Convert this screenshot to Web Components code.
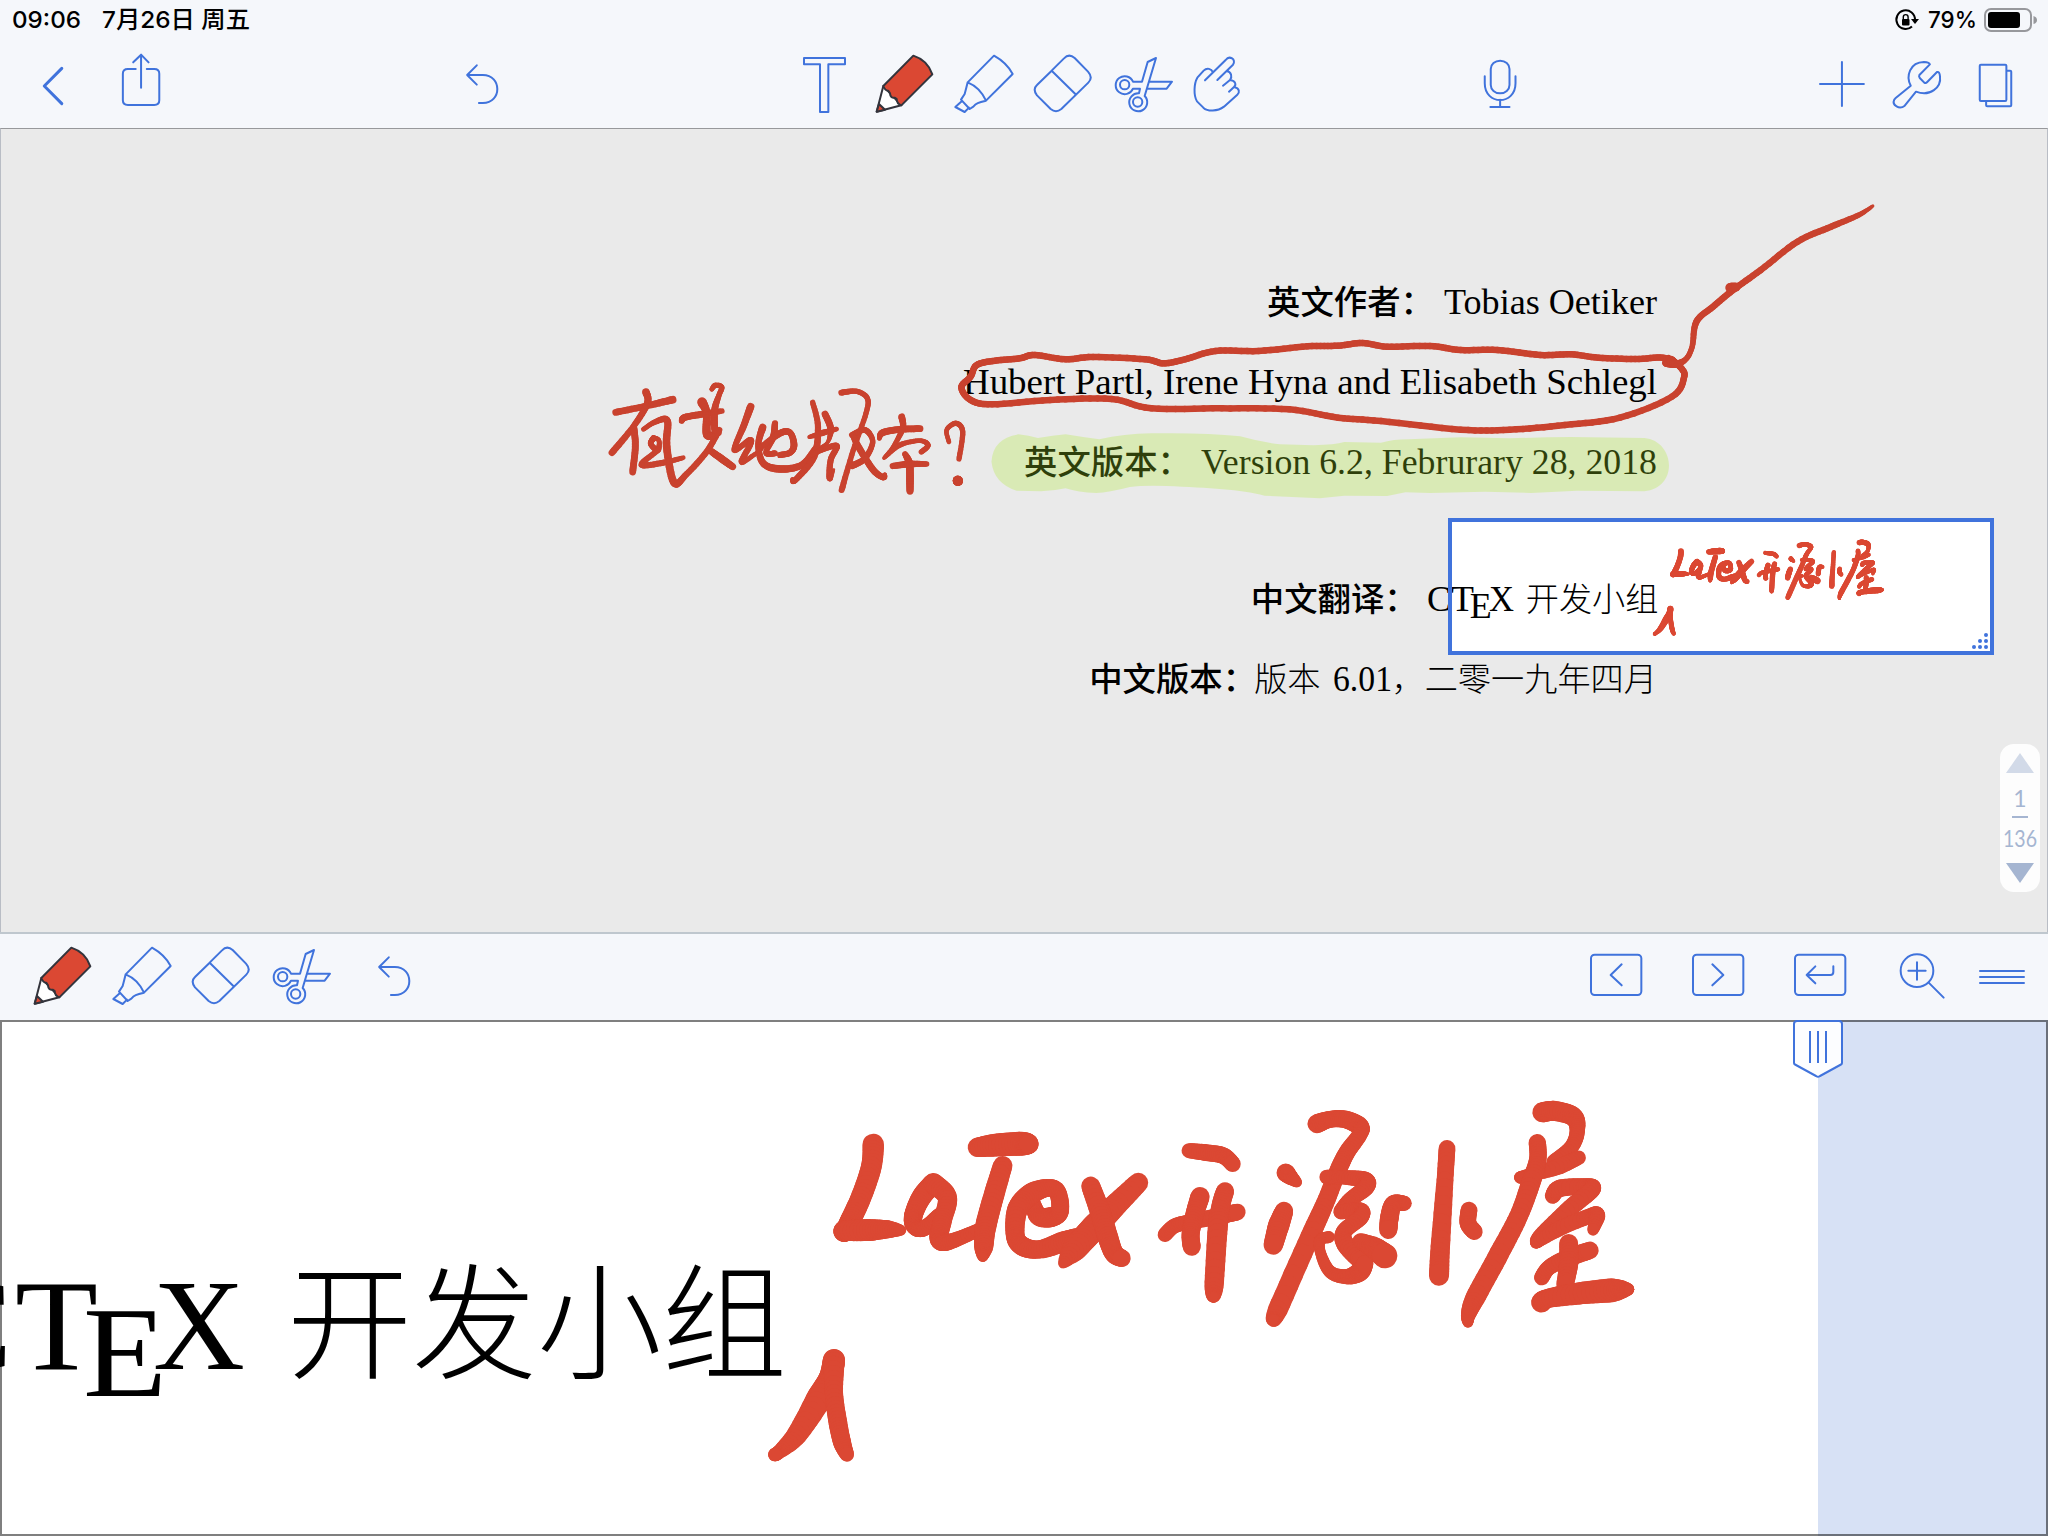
<!DOCTYPE html>
<html lang="zh-CN">
<head>
<meta charset="utf-8">
<title>Notability</title>
<style>
  html, body { margin: 0; height: 100%; background: #f5f7fb; overflow: hidden; }
</style>
</head>
<body>
<notes-app></notes-app>
<script>
const BLUE = '#4073dc', RED = '#db4833';

/* Ink strokes: "x,y,width" triples; the width carries on when left out. */
const LATEX_INK = [
  '190,193,64 184,260,62 154,350,62 122,420,62 107,452,62 107,452,62 180,450,66 235,448,54 274,451,30',
  '370,310,62 335,350,60 312,400,56 310,430,54 325,446,50 350,440,48 385,405,40',
  '372,312,64 412,352,58 398,420,56 386,474,56 405,488,50 450,474,44 505,450,40',
  '502,202,56 560,195,68 635,191,72 657,192,58',
  '578,257,58 552,345,62 527,440,64 521,500,58 518,532,28',
  '667,365,44 685,408,56 725,411,60 750,392,54 742,335,52 710,324,52 660,344,64 622,390,62 616,468,56 640,500,58 690,508,54 760,485,62 800,470,50',
  '985,308,58 900,392,70 850,445,78 795,505,76 758,552,26',
  '842,318,56 872,400,62 893,470,62 912,520,58 936,535,52',
  '1137,212,44 1190,218,50 1240,227,50 1268,252,48',
  '1065,464,44 1095,437,44 1150,424,46 1230,408,50 1282,396,50',
  '1170,350,58 1155,400,56 1142,460,54 1145,500,54',
  '1245,334,54 1232,380,56 1222,460,60 1212,620,58 1210,652,30',
  '1427,278,56 1440,290,48 1461,307,30',
  '1422,393,54 1405,440,64 1390,495,58',
  '1521,131,58 1560,118,50 1605,118,52 1648,138,56 1650,162,46 1612,215,50 1585,270,52 1545,370,54 1500,470,58 1403,690,60 1391,718,30',
  '1550,291,44 1600,292,42 1665,300,50 1668,322,50 1620,360,46 1593,394,46',
  '1593,396,44 1650,390,46 1652,412,48 1602,455,48 1608,495,54 1660,545,60',
  '1557,471,36 1530,480,34 1532,520,32 1560,575,38 1610,590,44 1650,575,58 1665,550,50',
  '1650,482,42 1695,505,64 1725,528,74',
  '1783,370,44 1750,372,52 1738,415,56 1735,450,54',
  '1911,205,50 1905,300,50 1891,500,58 1887,587,60',
  '1977,390,50 1974,430,50 1993,455,50',
  '2197,97,60 2235,93,60 2290,110,58 2302,150,46 2285,200,44 2230,245,42',
  '2306,233,42 2240,262,48 2140,290,38 2134,291,34',
  '2182,188,52 2183,240,52 2162,310,58 2125,410,56 2060,535,60 1995,655,60 1975,705,44 1974,728,30',
  '2228,348,46 2250,325,52 2330,320,50 2345,330,50 2280,385,52 2195,468,52 2178,488,34',
  '2178,488,34 2250,445,46 2340,408,46 2361,408,50 2349,450,34',
  '2195,593,46 2220,560,46 2285,530,54 2340,511,52',
  '2276,490,56 2276,550,58 2265,615,52',
  '2194,667,62 2215,655,56 2310,640,66 2405,631,72 2445,628,46 2458,628,28',
  '72,840,66 60,895,68 25,960,78 -40,1065,62 -92,1115,42 -106,1124,40',
  '72,840,66 72,940,54 84,1030,56 97,1090,54 111,1124,42'
];

const REMARK_INK = [
  '77,127,18 160,110,17 248,89,20', '168,66,20 172,100,18 130,170,16 66,248,18',
  '132,175,18 136,230,18 128,306,18', '160,178,12 195,156,14 232,152,18 230,230,20 252,338,20 290,312,16 350,245,16 388,180,16',
  '190,205,16 182,222,14 203,240,16 207,212,12 190,202,12', '205,240,14 155,284,16 220,278,16 280,263,12',
  '275,153,14 285,142,18 340,132,18 396,123,14', '336,96,26 350,130,20 352,195,22 385,188,18',
  '365,58,12 376,46,14 395,52,14 386,78,14 374,120,18 374,180,18', '348,160,12 375,158,12', '365,245,18 400,270,20 428,290,18',
  '482,110,20 460,170,18 433,240,14 478,211,16 480,225,16 456,276,16 515,238,10',
  '518,172,20 505,225,16 520,280,18 570,297,20 635,285,18 675,235,14', '555,160,16 550,200,18 528,248,14 555,250,16',
  '512,232,14 570,190,18 600,188,16 612,225,18 600,248,16 570,255,16',
  '668,97,14 684,170,16 672,260,18 616,330,16 607,327,10', '705,132,18 722,175,18 714,215,10 692,232,8', '658,201,10 700,188,16 740,177,12', '655,262,8 695,240,14 740,228,16 722,270,16 719,325,16 731,299,8',
  '754,68,16 800,64,14 832,85,14 828,130,14 790,240,14 755,360,16', '785,195,14 825,180,16 848,215,14 825,265,16 787,287,18', '788,195,14 808,235,18 850,300,18 880,322,16 885,313,10',
  '868,206,10 878,188,18 930,178,18 990,176,18', '935,140,18 938,175,16 910,230,12 882,264,10', '885,262,10 930,225,14 990,212,12 1014,226,14 994,246,14',
  '945,252,14 958,280,20 960,330,20 960,364,18', '908,288,16 960,282,18 1010,282,14',
  '1077,216,12 1070,180,12 1098,160,14 1118,185,14 1107,267,14', '1103,332,26 1104,333,26'
];

const LASSO_INK = [
  '1190,505,6 1185,520 1200,522 1180,503 1135,507 1075,503 1030,493 980,495 910,480 850,480 800,468 730,470 690,459 650,467 600,469 520,483 450,483 400,508 365,520 335,508 250,501 205,508 155,495 130,505 90,512 60,525 50,560 35,592 50,630 85,643 180,630 280,627 345,655 460,655 570,658 650,683 720,693 850,719 930,719 1020,705 1110,683 1195,620 1215,560 1208,530 1194,508',
  '1194,512,9 1202,522,7 1218,507,5 1228,470,5 1235,395,6 1262,350,6 1295,300,6 1340,240,6 1400,155,6 1455,110,6 1500,75,5 1523,48,3',
  '1290,293,9 1300,291,8'
];

/* Catmull-Rom sampling into short round-capped segments. sx/sy/ox/oy map the recorded units to pixels. */
function ink(strokes, ox, oy, sx, sy, sw, color) {
  let out = '';
  for (const s of strokes) {
    let w = 6;
    const p = s.split(' ').map(t => {
      const a = t.split(',').map(Number);
      if (a.length > 2) w = a[2];
      return [ox + a[0] * sx, oy + a[1] * sy, w * sw];
    });
    let last = p[0];
    for (let i = 0; i < p.length - 1; i++) {
      const a = p[i - 1] || p[i], b = p[i], c = p[i + 1], d = p[i + 2] || c;
      for (let k = 1; k <= 8; k++) {
        const t = k / 8, q = [0, 1, 2].map(j => j === 2 ? b[2] + (c[2] - b[2]) * t :
          0.5 * (2 * b[j] + (c[j] - a[j]) * t + (2 * a[j] - 5 * b[j] + 4 * c[j] - d[j]) * t * t + (3 * b[j] - a[j] - 3 * c[j] + d[j]) * t * t * t));
        out += `<line x1="${last[0].toFixed(1)}" y1="${last[1].toFixed(1)}" x2="${q[0].toFixed(1)}" y2="${q[1].toFixed(1)}" stroke-width="${q[2].toFixed(1)}"/>`;
        last = q;
      }
    }
  }
  return `<g stroke="${color}" stroke-linecap="round" fill="none">${out}</g>`;
}

const A = 'transform="scale(.35714 .33333)"', B = 'transform="translate(780 30) scale(.33333)"',
      C = 'transform="translate(1460 0) scale(.375 .33333)"', D = 'transform="translate(1560 38) scale(.33333)"';
/* name: [left, width, markup] */
const ICONS = {
  back: [40, 26, `<path ${A} style="stroke-width:3" d="M173 205 124 258 173 311"/>`],
  share: [118, 46, `<path ${A} d="M380 207H358Q344 207 344 221V301Q344 315 358 315H432Q446 315 446 301V221Q446 207 432 207H411M395 263V165M373 187 395 164 416 187"/>`],
  undo: [462, 38, `<path ${A} d="M1335 196 1308 225 1335 254M1308 225H1352C1406 225 1406 309 1352 309H1341"/>`],
  text: [800, 50, `<path ${B} d="M72 84H195V103H145V246H120V103H72Z"/>`],
  pencil: [872, 64, `<g ${B} style="stroke:#33343c"><path fill="#fff" d="M310 168 290 245 364 226Z"/><path fill="${RED}" stroke="none" d="M297 223 290 245 315 238Z"/><path fill="${RED}" d="M310 168 400 77Q443 91 457 133L364 226Q350 221 350 207L345 203Q331 205 330 190L325 182Q316 183 310 168ZM297 222 290 245 315 239Z"/></g>`],
  marker: [952, 64, `<path ${B} d="M563 157 642 77Q680 98 698 132L618 212C595 217 588 220 580 230L569 237 543 209 554 192Q559 174 563 157Q600 172 618 212M546 213 526 231 554 246 567 233"/>`],
  eraser: [1032, 64, `<path ${B} d="M815 122 852 85Q867 69 884 84L924 125Q940 143 925 158L844 237Q828 250 812 237L771 196Q757 178 771 165ZM815 122 886 192"/>`],
  scissors: [1112, 66, `<g ${B}><circle cx="1034" cy="164" r="14"/><circle cx="1073" cy="216" r="14"/><path d="M1059 176A27 27 0 1 1 1059 155H1086L1103 96 1128 84 1094 198A27 27 0 1 1 1077 190L1080 176H1059M1109 155H1176L1160 176H1105"/></g>`],
  hand: [1192, 50, `<path ${B} d="M1275 151 1337 90C1348 75 1370 88 1359 104L1312 150M1340 123C1355 126 1357 141 1350 150L1329 167M1350 150C1368 152 1369 165 1362 171L1347 185M1362 171C1380 175 1379 188 1372 194L1332 230C1312 245 1283 245 1270 233L1251 214C1240 196 1242 160 1252 143L1271 122C1281 112 1294 116 1299 127"/>`],
  mic: [1480, 40, `<g ${C}><rect x="82" y="182" width="50" height="98" rx="25"/><path d="M66 229V250C66 317 148 317 148 250V229M107 299V321M81 321H132"/></g>`],
  plus: [1818, 48, `<path ${C} d="M960 252H1077M1018.500 186V318"/>`],
  wrench: [1888, 58, `<path ${C} d="M1202 257C1188 228 1200 187 1237 186Q1252 187 1253 193L1225 225Q1223 229 1226 234L1238 248Q1242 251 1246 246L1272 216Q1279 214 1280 229C1284 262 1254 291 1216 275L1186 317C1172 330 1151 316 1158 299L1161 295Z"/>`],
  pages: [1976, 40, `<path ${C} d="M1389 194H1454Q1457 194 1457 197V299Q1457 303 1454 303H1389Q1386 303 1386 299V197Q1386 194 1389 194ZM1457 212H1467Q1470 212 1470 215V316Q1470 319 1467 319H1406Q1403 319 1403 316V303"/>`],
  prev: [1588, 56, `<g ${D}><rect x="93" y="74" width="151" height="121" rx="11"/><path d="M185 103 152 135 185 166"/></g>`],
  next: [1690, 56, `<g ${D}><rect x="399" y="74" width="151" height="121" rx="11"/><path d="M457 103 490 135 457 166"/></g>`],
  enter: [1792, 56, `<g ${D}><rect x="705" y="74" width="151" height="121" rx="11"/><path d="M766 109 740 135 766 160M740 135H811Q820 135 820 126V109"/></g>`],
  zoom: [1898, 48, `<g ${D}><circle cx="1071" cy="122" r="49"/><path d="M1045 122.500H1097M1071 97V149M1106 158 1151 203"/></g>`],
  menu: [1978, 48, `<path ${D} d="M1260 123H1392M1260 141H1392M1260 159H1392"/>`]
};

const define = (name, html, after) => customElements.define(name, class extends HTMLElement {
  connectedCallback() {
    if (this.shadowRoot) return;
    const root = this.attachShadow({ mode: 'open' });
    root.innerHTML = typeof html === 'function' ? html(this) : html;
    if (after) after(this, root);
  }
});

/* Text run condensed or widened to a given width */
define('fit-text', `<style>:host{display:inline-block;white-space:nowrap;flex:none}span{display:inline-block;transform-origin:0 50%}</style><span><slot></slot></span>`,
  (el, root) => {
    const w = +el.getAttribute('w'), s = root.querySelector('span');
    el.style.width = w + 'px';
    const n = s.getBoundingClientRect().width / (el.getBoundingClientRect().width / w || 1);
    if (n) s.style.transform = `scaleX(${w / n})`;
  });

define('tool-icon', el => {
  const [x, w, body] = ICONS[el.getAttribute('name')], y = el.hasAttribute('low') ? 42 : 40, h = el.hasAttribute('low') ? 86 : 88;
  return `<style>:host{display:block;flex:none}svg{display:block;fill:none;stroke:${BLUE};stroke-width:2;stroke-linecap:round;stroke-linejoin:round}svg *{vector-effect:non-scaling-stroke}</style>
  <svg width="${w}" height="${h}" viewBox="${x} ${y} ${w} ${h}">${body}</svg>`;
});

define('tool-bar', `<style>:host{display:flex;box-sizing:border-box}</style><slot></slot>`);
define('tool-group', `<style>:host{display:flex}</style><slot></slot>`);

define('status-bar', `<style>
  :host{display:flex;height:40px;box-sizing:border-box;padding:0 9px 0 12px;align-items:center;justify-content:space-between;font:500 23.500px Inter,"Noto Sans CJK SC",sans-serif;color:#000}
  div{display:flex;align-items:center;line-height:40px}
  svg{display:block}
</style>
<div><fit-text w="69">09:06</fit-text><fit-text w="148" style="margin-left:21px">7月26日 周五</fit-text></div>
<div><svg width="26" height="26" viewBox="0 0 26 26" fill="none" stroke="#000" stroke-width="2"><path d="M19 19.500A9.300 9.300 0 1 1 22 13"/><path d="M18 12h8l-4 5z" fill="#000" stroke="none"/><rect x="9" y="12" width="7.500" height="6.500" rx="1" fill="#000" stroke="none"/><path d="M10.300 12.500V10a2.400 2.400 0 0 1 4.800 0V12.500" stroke-width="1.400"/></svg>
<fit-text w="49" style="margin-left:9px">79%</fit-text>
<svg style="margin-left:7px" width="55" height="26" viewBox="0 0 55 26"><rect x="1" y="2" width="46" height="22" rx="6" fill="none" stroke="#97989c" stroke-width="2"/><rect x="4" y="5" width="32" height="16" rx="3"/><path d="M49.500 9Q53 10 53 13T49.500 17Z" fill="#97989c"/></svg></div>`);

define('ink-layer', el => el.getAttribute('kind') === 'page'
  ? `<style>:host{display:block;position:absolute;inset:0;pointer-events:none}svg{display:block}</style>
    <svg width="2048" height="804" viewBox="0 128 2048 804">
    <path transform="translate(940 190) scale(.6125 .33333)" fill="rgb(189,255,43)" fill-opacity=".27" d="M84 815Q86 745 128 733Q145 736 160 744Q185 737 205 733Q235 742 260 748Q300 731 345 730Q430 727 490 739Q525 757 555 763L610 766Q645 764 660 756L720 758Q740 748 765 748L850 742 930 745Q980 742 1030 741L1150 744C1200 752 1207 893 1150 904L1040 902 965 909 890 905 800 909 760 907 730 918 660 917 620 925 530 917C490 898 440 894 370 888Q330 886 310 891Q275 908 255 909Q225 907 205 895Q185 903 165 904L125 902Q88 880 84 815Z"/>
    ${ink(LASSO_INK, 940, 190, .6125, 1 / 3, 1.08, RED)}
    ${ink(REMARK_INK, 590, 370, 1 / 3, 1 / 3, .38, RED)}
    ${ink(LATEX_INK, 1448 + 810 / 3.75, 518 + 60 / 3.75, 1 / 11.25, 1 / 11.25, 1 / 11.25, RED)}</svg>`
  : `<style>:host{display:block;position:absolute;inset:0;pointer-events:none}svg{display:block}</style>
    <svg width="2048" height="516" viewBox="0 1020 2048 516">${ink(LATEX_INK, 810, 1080, 1 / 3, 1 / 3, 1 / 3, RED)}</svg>`);

define('page-sheet', `<style>
  :host{display:flex;flex-direction:column;align-items:flex-end;box-sizing:border-box;width:100%;height:100%;padding:134px 391px 0 0;background:#fff;font:36px/80px "Liberation Serif","Noto Sans CJK SC",serif;color:#000}
  .row{display:flex;height:80px;align-items:baseline;flex:none}
  .gap{margin-top:57px}
  b{font:500 33.400px/74px "Noto Sans CJK SC",sans-serif;display:block;width:167px;white-space:nowrap}
  .song{font:300 33.200px/74px "Noto Sans CJK SC",sans-serif;white-space:nowrap}
  .e{transform:translateY(7px)}
</style>
<div class="row"><b>英文作者：</b><fit-text w="213" style="margin-left:10px">Tobias Oetiker</fit-text></div>
<div class="row"><fit-text w="694">Hubert Partl, Irene Hyna and Elisabeth Schlegl</fit-text></div>
<div class="row"><b>英文版本：</b><fit-text w="456" style="margin-left:10px">Version 6.2, Februrary 28, 2018</fit-text></div>
<div class="row gap" style="margin-right:-1.5px"><b>中文翻译：</b><fit-text w="24" style="margin-left:9px">C</fit-text><fit-text w="23">T</fit-text><fit-text class="e" w="22" style="margin-left:-4px">E</fit-text><fit-text w="25" style="margin-left:-3px">X</fit-text><span class="song" style="margin-left:12px">开发小组</span></div>
<div class="row"><b style="width:165px">中文版本：</b><span class="song">版本</span><fit-text w="59" style="margin-left:12px">6.01</fit-text><span class="song">，二零一九年四月</span></div>`);

define('zoom-window', `<style>
  :host{position:absolute;left:1448px;top:390px;width:546px;height:137px;box-sizing:border-box;border:4px solid ${BLUE};box-shadow:0 0 0 2200px rgba(0,0,0,.083)}
  svg{position:absolute;right:0;bottom:0}
</style><svg width="20" height="20" viewBox="0 0 20 20" fill="${BLUE}"><circle cx="16" cy="4" r="2"/><circle cx="10" cy="10" r="2"/><circle cx="16" cy="10" r="2"/><circle cx="4" cy="16" r="2"/><circle cx="10" cy="16" r="2"/><circle cx="16" cy="16" r="2"/></svg>`);

define('page-pill', `<style>
  :host{position:absolute;left:2000px;top:616px;width:40px;height:148px;border-radius:14px;background:#fdfdfd;display:flex;flex-direction:column;align-items:center;color:#a5b5d1;font:23px/24px Lato,sans-serif}
  svg{display:block;flex:none}.n{margin-top:13px;height:24px}.bar{width:16px;height:2px;background:#a5b5d1;margin-top:6px}.t{margin-top:8px;height:24px}
</style><svg style="margin-top:9px" width="28" height="20"><path d="M14 0 28 20H0Z" fill="#d2dae8"/></svg><div class="n">1</div><div class="bar"></div><fit-text class="t" w="34">136</fit-text><svg style="margin-top:13px" width="28" height="20"><path d="M0 0H28L14 20Z" fill="#a5b5d1"/></svg>`);

define('page-canvas', `<style>
  :host{display:block;position:relative;height:804px;overflow:hidden}
  .frame{position:absolute;inset:0;border:solid #b9bdc5;border-width:0 1px;border-top:1px solid #97989b}
</style><page-sheet></page-sheet><ink-layer kind="page"></ink-layer><zoom-window></zoom-window><div class="frame"></div><page-pill></page-pill>`);

define('zoom-pane', `<style>
  :host{display:flex;position:relative;height:516px;background:#fff;overflow:hidden}
  .line{flex:1;min-width:0;display:flex;align-items:baseline;height:200px;line-height:200px;padding-top:195px;font:129px/200px "Liberation Serif",serif;color:#000}
  .line>*{flex:none}
  .song{font:300 125px/200px "Noto Sans CJK SC",sans-serif;white-space:nowrap;margin-left:42px}
  .e{transform:translateY(27px)}
  .next{width:230px;background:#d7e1f5}
  .frame{position:absolute;inset:0;border:2px solid rgba(0,0,0,.5)}
  .handle{position:absolute;left:1791px;top:0}
</style>
<div class="line"><span style="margin-left:-74px">C</span><fit-text w="83" style="margin-left:3px">T</fit-text><fit-text class="e" w="84" style="margin-left:-15px">E</fit-text><fit-text w="92" style="margin-left:-14px">X</fit-text><span class="song">开发小组</span></div>
<div class="next"></div><ink-layer kind="zoom"></ink-layer><div class="frame"></div>
<svg class="handle" width="54" height="60" viewBox="1791 1020 54 60" fill="#fcfdff" stroke="${BLUE}" stroke-width="2" stroke-linejoin="round"><path d="M1794 1024Q1794 1021 1797 1021H1839Q1842 1021 1842 1024V1063Q1842 1064 1841 1064.500L1820 1076Q1818 1077.500 1816 1076L1795 1064.500Q1794 1064 1794 1063Z"/><path d="M1810 1031V1063M1818 1031V1063M1826 1031V1063"/></svg>`);

const icon = (n, m, low) => `<tool-icon name="${n}" style="margin-left:${m}px"${low ? ' low' : ''}></tool-icon>`;
define('notes-app', `<style>
  :host{display:flex;flex-direction:column;width:2048px;height:1536px;background:#f5f7fb;overflow:hidden}
  .top{height:88px;padding:0 32px 0 40px}
  .low{height:88px;padding:0 22px 0 30px;border-top:2px solid #bfc7ce}
  .mid{margin-left:300px}
  .end{margin-left:auto}
</style>
<status-bar></status-bar>
<tool-bar class="top">
  <tool-group>${icon('back', 0)}${icon('share', 52)}${icon('undo', 298)}</tool-group>
  <tool-group class="mid">${icon('text', 0)}${icon('pencil', 22)}${icon('marker', 16)}${icon('eraser', 16)}${icon('scissors', 16)}${icon('hand', 14)}${icon('mic', 238)}</tool-group>
  <tool-group class="end">${icon('plus', 0)}${icon('wrench', 22)}${icon('pages', 30)}</tool-group>
</tool-bar>
<page-canvas></page-canvas>
<tool-bar class="low">
  <tool-group>${icon('pencil', 0, 1)}${icon('marker', 16, 1)}${icon('eraser', 16, 1)}${icon('scissors', 16, 1)}${icon('undo', 38, 1)}</tool-group>
  <tool-group class="end">${icon('prev', 0, 1)}${icon('next', 46, 1)}${icon('enter', 46, 1)}${icon('zoom', 50, 1)}${icon('menu', 32, 1)}</tool-group>
</tool-bar>
<zoom-pane></zoom-pane>`);
</script>
</body>
</html>
